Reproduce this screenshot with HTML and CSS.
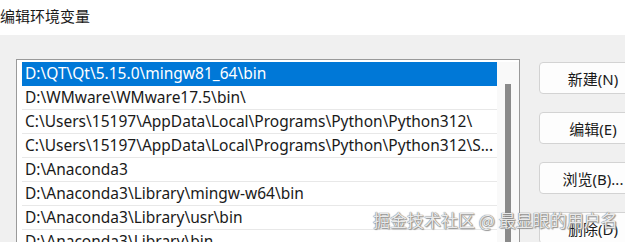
FILE: index.html
```html
<!DOCTYPE html>
<html lang="zh-CN">
<head>
    <meta charset="UTF-8">
    <title>编辑环境变量</title>
    <link rel="stylesheet" href="styles.css">
</head>
<body>
    <div class="titlebar">编辑环境变量</div>
    <div class="main">
        <div class="listbox">
            <ul class="rows">
                <li class="selected">D:\QT\Qt\5.15.0\mingw81_64\bin</li>
                <li>D:\WMware\WMware17.5\bin\</li>
                <li>C:\Users\15197\AppData\Local\Programs\Python\Python312\</li>
                <li>C:\Users\15197\AppData\Local\Programs\Python\Python312\S...</li>
                <li>D:\Anaconda3</li>
                <li>D:\Anaconda3\Library\mingw-w64\bin</li>
                <li>D:\Anaconda3\Library\usr\bin</li>
                <li>D:\Anaconda3\Library\bin</li>
            </ul>
            <div class="scroll">
                <div class="thumb"></div>
            </div>
        </div>
        <div class="actions">
            <button>新建(N)</button>
            <button>编辑(E)</button>
            <button>浏览(B)...</button>
            <button>删除(D)</button>
        </div>
    </div>
    <div class="watermark">掘金技术社区 @ 最显眼的用户名</div>
</body>
</html>
```

FILE: styles.css
```css
body {
    margin: 0;
    width: 625px;
    height: 242px;
    overflow: hidden;
    background-color: #f0f0f0;
    font-family: 'Noto Sans', 'Noto Sans CJK SC', sans-serif;
    font-size: 15px;
    color: #1a1a1a;
    position: relative;
}
.titlebar {
    height: 35px;
    line-height: 32px;
    background-color: #fff;
    font-family: 'Noto Sans CJK SC', sans-serif;
    font-size: 15px;
}
.main {
    display: flex;
    padding-top: 24px;
    padding-left: 16px;
    gap: 19px;
    height: 183px;
    overflow: hidden;
}
.listbox {
    box-sizing: border-box;
    display: flex;
    width: 504px;
    height: 200px;
    border: 1px solid #9a9a9a;
    background-color: #fff;
    padding: 2px 0 0 5px;
    flex-shrink: 0;
}
.rows {
    list-style: none;
    margin: 0;
    padding: 0;
    width: 475px;
}
.rows li {
    height: 23px;
    line-height: 23px;
    padding-left: 3px;
    border-bottom: 1px solid #e8e8e8;
    white-space: nowrap;
    overflow: hidden;
    font-size: 15.5px;
}
.rows li.selected {
    background-color: #0078d7;
    color: #fff;
    border-bottom-color: #0078d7;
}
.scroll {
    flex: 1;
    background-color: #f9f9f9;
    padding: 22px 0 0 8px;
}
.thumb {
    width: 6px;
    height: 200px;
    background-color: #8a8a8a;
}
.actions {
    display: flex;
    flex-direction: column;
    gap: 18px;
    padding-top: 3px;
}
.actions button {
    width: 108px;
    height: 32px;
    flex-shrink: 0;
    background-color: #fdfdfd;
    border: 1px solid #d3d3d3;
    border-radius: 4px;
    font-family: 'Noto Sans', 'Noto Sans CJK SC', sans-serif;
    font-size: 15px;
    color: #1a1a1a;
    padding: 0;
}
.watermark {
    position: absolute;
    left: 373px;
    top: 207px;
    font-family: 'Noto Sans CJK SC', sans-serif;
    font-size: 17px;
    color: rgba(255, 255, 255, 0.85);
    text-shadow: 0 0 1px #777, 0 0 1px #777, 1px 1px 1px #999;
    white-space: nowrap;
}
```
